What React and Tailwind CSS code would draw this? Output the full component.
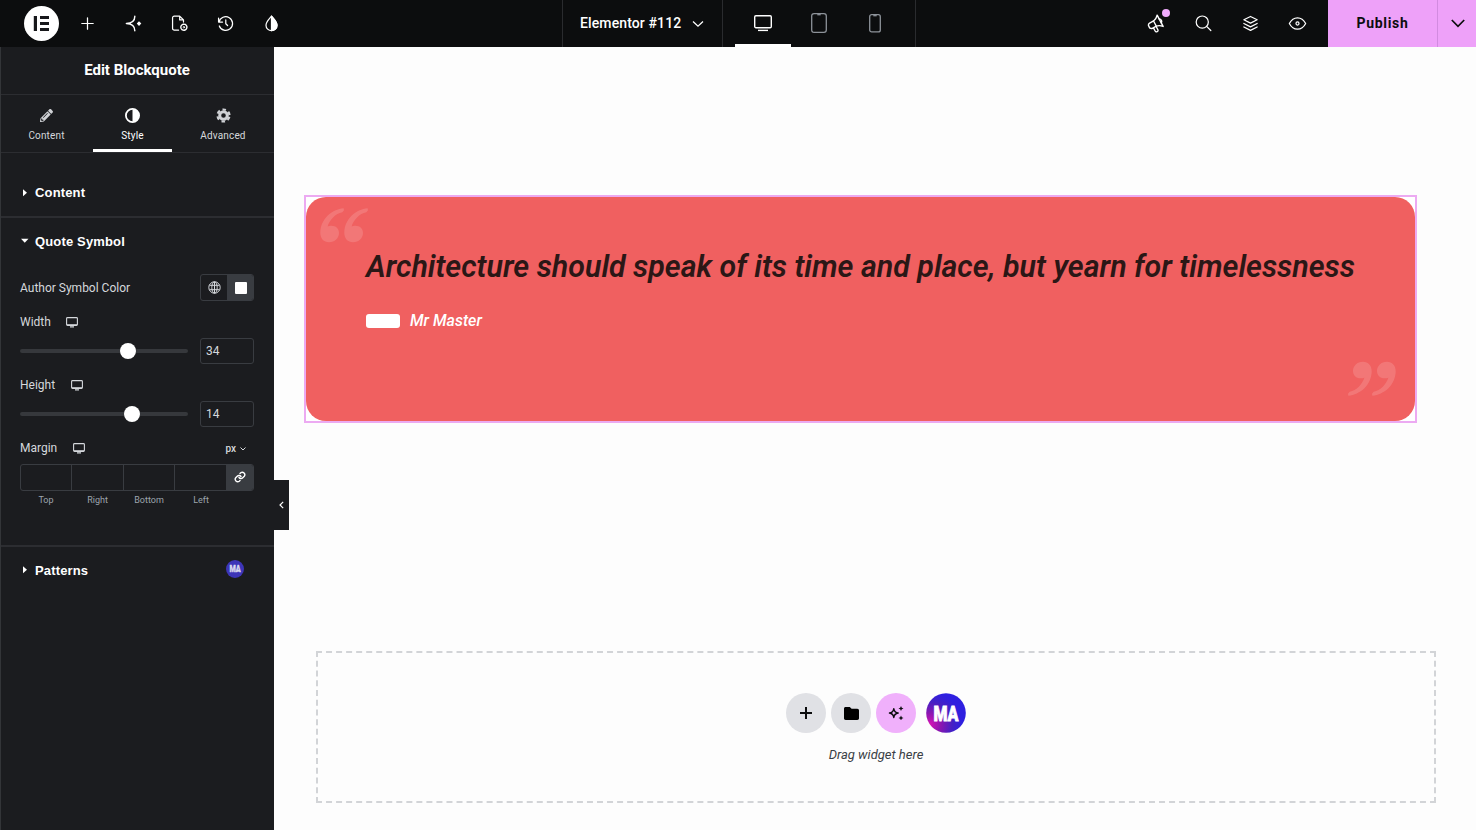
import { FaPencilAlt } from "react-icons/fa";

const Svg = ({ size = 19, className = "", children }) => (
  <svg
    width={size}
    height={size}
    viewBox="0 0 20 20"
    fill="none"
    stroke="currentColor"
    strokeWidth="1.3"
    strokeLinecap="round"
    strokeLinejoin="round"
    className={className}
  >
    {children}
  </svg>
);

const Logo = () => (
  <svg width="35" height="35" viewBox="0 0 35 35" className="ml-6">
    <circle cx="17.5" cy="17.5" r="17.5" fill="#fff" />
    <path
      d="M9.8 10h3.2v15H9.8zM16 10h9v3h-9zM16 16h9v3h-9zM16 22h9v3h-9z"
      fill="#17181b"
    />
  </svg>
);

const leftTools = [
  <Svg>
    <path d="M10 4v12M4 10h12" />
  </Svg>,
  <Svg>
    <path d="M11.4 2.4C11.4 7 8 9.800 2.500 10c5.500.2 8.900 3 8.900 7.600" strokeWidth="1.500" />
    <path d="M15.800 7.500l2.400 2.500-2.400 2.500-2.400-2.500z" fill="currentColor" stroke="none" />
  </Svg>,
  <Svg>
    <path d="M9 17H4.500A1.800 1.800 0 0 1 2.700 15.200V4A1.800 1.800 0 0 1 4.500 2.200h5.700l4 4V8.500M10.200 2.300v4h4" />
    <circle cx="14.600" cy="13.900" r="3.200" strokeWidth="1.500" strokeDasharray="1.900 0.400" />
    <circle cx="14.600" cy="13.900" r="0.800" strokeWidth="0.900" />
  </Svg>,
  <Svg>
    <path d="M3.200 8.600A7.200 7.200 0 1 1 3.500 12.600M2.700 4.300v4.200h4.200M10.300 6.300V10.200l1.900 1.900" />
  </Svg>,
  <Svg>
    <path d="M10 2.200C7.500 5.300 4.200 8.200 4.200 11.800a5.800 5.800 0 0 0 11.600 0C15.800 8.200 12.500 5.300 10 2.200z" />
    <path d="M10 2.200C12.500 5.300 15.800 8.200 15.800 11.800A5.800 5.800 0 0 1 10 17.600z" fill="currentColor" />
  </Svg>,
];

const rightTools = [
  <Svg>
    <g transform="rotate(-28 10 10)">
      <path d="M8.500 6.200H3.800a2.300 2.300 0 0 0-2.300 2.300v1.600a2.300 2.300 0 0 0 2.300 2.300h4.700c2 .2 4.300 1.400 6.200 3.600V2.600c-1.900 2.200-4.200 3.400-6.200 3.600z" strokeWidth="1.500" />
      <path d="M8.500 6.200v6.200M5 12.600v3.700a1.600 1.600 0 0 0 3.200 0v-3.700M14.700 7a2.600 2.600 0 0 1 0 4.700" strokeWidth="1.400" />
    </g>
  </Svg>,
  <Svg>
    <circle cx="8.700" cy="8.500" r="6.400" />
    <path d="M13.300 13l4.400 4.400" />
  </Svg>,
  <Svg>
    <path d="M10 2.600l7 3.500-7 3.500-7-3.500zM3 10l7 3.500 7-3.500M3 13.700l7 3.500 7-3.500" />
  </Svg>,
  <Svg>
    <path d="M1.400 10C3.500 6 6.500 4 10 4s6.500 2 8.600 6c-2.100 4-5.100 6-8.600 6s-6.500-2-8.600-6z" />
    <circle cx="10" cy="10" r="1.600" />
  </Svg>,
];

const TopBar = () => (
  <header className="flex h-[47px] w-full shrink-0 bg-[#0c0d0e] text-white">
    <div className="flex w-[562px] items-center">
      <Logo />
      <div className="ml-[5.5px] flex pb-px">
        {leftTools.map((icon, i) => (
          <span key={i} className="flex w-[46px] justify-center">
            {icon}
          </span>
        ))}
      </div>
    </div>
    <div className="flex w-[160px] items-center border-l border-[#2a2b2e] pl-[17px]">
      <span className="text-[14px] font-medium tracking-[0.12px] whitespace-nowrap">Elementor #112</span>
      <svg width="12" height="8" viewBox="0 0 12 8" fill="none" stroke="#fff" strokeWidth="1.300" className="ml-[11px]">
        <path d="M1 1.500l5 4.700 5-4.700" />
      </svg>
    </div>
    <div className="flex w-[194px] border-x border-[#2a2b2e] pl-3">
      <div className="flex w-14 items-center justify-center border-b-[3px] border-white pt-[2px]">
        <svg width="18" height="18" viewBox="0 0 18 18" fill="none" stroke="#fff" strokeWidth="1.400">
          <rect x="0.700" y="1.700" width="16.600" height="12" rx="1.200" />
          <path d="M4 16.400h10" />
        </svg>
      </div>
      <div className="flex w-14 items-center justify-center pb-px">
        <svg width="16" height="20" viewBox="0 0 16 20" fill="none" stroke="#8d9299" strokeWidth="1.300">
          <rect x="0.700" y="0.700" width="14.600" height="18.600" rx="2.400" />
          <path d="M6.300 1.700h3.400" />
        </svg>
      </div>
      <div className="flex w-14 items-center justify-center">
        <svg width="12" height="19" viewBox="0 0 12 19" fill="none" stroke="#8d9299" strokeWidth="1.300">
          <rect x="0.700" y="0.700" width="10.600" height="17.200" rx="2" />
          <path d="M4.300 1.700h3.400" />
        </svg>
      </div>
    </div>
    <div className="flex flex-1 items-center justify-end pr-[7px] pb-px">
      {rightTools.map((icon, i) => (
        <span key={i} className="relative flex w-[47px] justify-center">
          {icon}
          {i === 0 && (
            <span className="absolute -top-[5px] right-[10px] h-2 w-2 rounded-full bg-[#f0abfc]" />
          )}
        </span>
      ))}
    </div>
    <button className="w-[109px] bg-[#eea1f9] text-[14px] font-bold tracking-[0.7px] text-[#0c0d0e]">
      Publish
    </button>
    <button className="flex w-[39px] items-center justify-center border-l border-[#d28be0] bg-[#eea1f9]">
      <svg width="14" height="9" viewBox="0 0 14 9" fill="none" stroke="#0c0d0e" strokeWidth="1.700" className="ml-[2px]">
        <path d="M0.800 1l6.200 6.300L13.200 1" />
      </svg>
    </button>
  </header>
);

const Monitor = () => (
  <svg width="12" height="11" viewBox="0 0 12 11" fill="none" stroke="#d5d8dc" strokeWidth="1.100">
    <rect x="0.600" y="0.600" width="10.800" height="7.800" rx="0.900" />
    <path d="M1 7.700h10M4 9.900h4" />
  </svg>
);

const SectionTitle = ({ open, children }) => (
  <div className="flex items-center">
    <svg width="8" height="8" viewBox="0 0 8 8" fill="#fff" className="mr-[7px] ml-px -mt-px">
      {open ? <path d="M0 1.800h7.500L3.750 5.800z" /> : <path d="M2 0.200L6 3.700 2 7.200z" />}
    </svg>
    <h2 className="-ml-px font-['Liberation_Sans',sans-serif] text-[13px] font-bold tracking-[0.15px] text-white">
      {children}
    </h2>
  </div>
);

const Slider = ({ percent, value }) => (
  <div className="mt-[6px] flex h-[26px] items-center justify-between">
    <div className="relative h-1 w-[168px] rounded-full bg-[#36383c]">
      <span
        className="absolute -top-[6px] -ml-2 h-4 w-4 rounded-full bg-white"
        style={{ left: percent + "%" }}
      />
    </div>
    <div className="flex h-[26px] w-[54px] items-center rounded-[3px] border border-[#393c41] pl-[5px] text-[12px]">
      {value}
    </div>
  </div>
);

const Label = ({ children }) => (
  <div className="flex items-center">
    <span className="text-[12px]">{children}</span>
    <span className="ml-[15.500px]">
      <Monitor />
    </span>
  </div>
);

const Sidebar = () => (
  <aside className="relative flex w-[274px] shrink-0 flex-col border-l border-[#333538] bg-[#1b1c1f] text-[#d5d8dc]">
    <div className="flex h-12 items-center justify-center border-b border-[#2c2d31] pr-px">
      <h1 className="text-[15px] font-bold text-white">Edit Blockquote</h1>
    </div>
    <div className="flex h-[58px] border-b border-[#2c2d31] text-[10px] tracking-[0.15px]">
      <div className="flex w-[91px] flex-col items-center gap-[7px] pt-[14px]">
        <FaPencilAlt size={13} className="mb-px text-[#d0d2d6]" />
        <span className="leading-3">Content</span>
      </div>
      <div className="ml-px flex w-[79px] flex-col items-center gap-[7px] border-b-[3px] border-white pt-[13px] text-white">
        <svg width="15" height="15" viewBox="0 0 15 15" fill="none">
          <circle cx="7.500" cy="7.500" r="6.600" stroke="#fff" strokeWidth="1.800" />
          <path d="M7.500 1a6.500 6.500 0 0 1 0 13z" fill="#fff" />
        </svg>
        <span className="leading-3">Style</span>
      </div>
      <div className="flex flex-1 flex-col items-center gap-[7px] pt-[13px]">
        <svg width="15" height="15" viewBox="0 0 15 15" fill="none" stroke="#d0d2d6">
          <circle cx="7.500" cy="7.500" r="3.800" strokeWidth="3" />
          <circle cx="7.500" cy="7.500" r="6" strokeWidth="2.200" strokeDasharray="3.500 2.783" strokeDashoffset="-1.400" />
        </svg>
        <span className="leading-3">Advanced</span>
      </div>
    </div>

    <div className="flex h-[65px] items-center border-b-2 border-[#2c2d31] pt-[17px] pl-[19px]">
      <SectionTitle>Content</SectionTitle>
    </div>

    <div className="h-[329px] border-b-2 border-[#2c2d31] pr-5 pl-[19px]">
      <div className="flex h-[47px] items-center">
        <SectionTitle open>Quote Symbol</SectionTitle>
      </div>
      <div className="mt-[9px] flex h-[27px] items-center justify-between">
        <span className="text-[12px]">Author Symbol Color</span>
        <div className="flex h-[27px] w-[54px] overflow-hidden rounded-[3px] border border-[#393c41]">
          <span className="flex flex-1 items-center justify-center">
            <svg width="13" height="13" viewBox="0 0 13 13" fill="none" stroke="#d5d8dc">
              <circle cx="6.500" cy="6.500" r="5.700" />
              <ellipse cx="6.500" cy="6.500" rx="2.700" ry="5.700" />
              <path d="M1.500 4.300h10M1.500 8.700h10M6.500 1v11" />
            </svg>
          </span>
          <span className="flex w-[26px] items-center justify-center bg-[#393c41] pl-[2px]">
            <span className="h-3 w-3 rounded-[1px] bg-white" />
          </span>
        </div>
      </div>

      <div className="mt-[11px] flex h-5 items-center">
        <Label>Width</Label>
      </div>
      <Slider percent={64.5} value="34" />

      <div className="mt-[11px] flex h-5 items-center">
        <Label>Height</Label>
      </div>
      <Slider percent={66.6} value="14" />

      <div className="mt-[11px] flex h-5 items-center justify-between">
        <Label>Margin</Label>
        <span className="flex items-center gap-1 pt-px pr-2 text-[10px] font-medium">
          px
          <svg width="6" height="4" viewBox="0 0 6 4" fill="none" stroke="#d5d8dc">
            <path d="M0.500 0.500L3 3l2.500-2.500" />
          </svg>
        </span>
      </div>
      <div className="mt-[6px] flex h-[27px] overflow-hidden rounded-[3px] border border-[#393c41]">
        <span className="w-[51px] border-r border-[#393c41]" />
        <span className="w-[52px] border-r border-[#393c41]" />
        <span className="w-[51px] border-r border-[#393c41]" />
        <span className="w-[51px]" />
        <span className="flex flex-1 items-center justify-center bg-[#393c41] pb-px">
          <svg width="12" height="12" viewBox="0 0 24 24" fill="none" stroke="#fff" strokeWidth="2.800" strokeLinecap="round">
            <path d="M10 13a5 5 0 0 0 7.500.5l3-3a5 5 0 0 0-7-7L12 5" />
            <path d="M14 11a5 5 0 0 0-7.500-.5l-3 3a5 5 0 0 0 7 7L12 19" />
          </svg>
        </span>
      </div>
      <div className="mt-[3px] flex h-[14px] items-center text-[9px] text-[#9da5ae]">
        <span className="w-[52px] text-center">Top</span>
        <span className="w-[51px] text-center">Right</span>
        <span className="w-[52px] text-center">Bottom</span>
        <span className="w-[52px] text-center">Left</span>
      </div>
    </div>

    <div className="flex h-[47px] items-center justify-between pr-[30px] pl-[19px]">
      <SectionTitle>Patterns</SectionTitle>
      <svg width="18" height="18" viewBox="0 0 40 40" className="mb-[3px]">
        <circle cx="20" cy="20" r="20" fill="#3d35b8" />
        <MaText fill="#d9d9ef" />
      </svg>
    </div>

    <button className="absolute top-[433px] left-[273px] flex h-[50px] w-[15px] items-center justify-center bg-[#1b1c1f]">
      <svg width="5" height="8" viewBox="0 0 5 8" fill="none" stroke="#fff" strokeWidth="1.200">
        <path d="M4.200 0.800L1 4l3.200 3.200" />
      </svg>
    </button>
  </aside>
);

const MaText = ({ fill }) => (
  <text
    x="20"
    y="27.500"
    textAnchor="middle"
    textLength="25"
    lengthAdjust="spacingAndGlyphs"
    fill={fill}
    stroke={fill}
    strokeWidth="0.800"
    fontFamily="Roboto, sans-serif"
    fontWeight="900"
    fontSize="21"
  >
    MA
  </text>
);

const QuoteMark = ({ className }) => (
  <svg width="49" height="35" viewBox="0 0 49 35" fill="#fff" fillOpacity="0.150" className={className}>
    <path d="M23.600 0.300C12 1.500 0.800 10.500 0.300 24.500C0.200 30.500 3.800 34.300 9 34.300C14.800 34.300 19 30 19 25C19 20.500 15.800 17.700 11.500 17.700C9.800 17.700 8.600 18 7.600 18.600C9.500 12 15.500 5.500 22.300 4.300L24 2.200z" />
    <path d="M47.600 0.300C36 1.500 24.800 10.500 24.300 24.500C24.200 30.500 27.800 34.300 33 34.300C38.800 34.300 43 30 43 25C43 20.500 39.800 17.700 35.500 17.700C33.800 17.700 32.600 18 31.600 18.600C33.500 12 39.500 5.500 46.300 4.300L48 2.200z" />
  </svg>
);

const Blockquote = () => (
  <div className="h-[228px] w-[1113px] border-2 border-[#ecaaf2] bg-white">
    <blockquote className="relative h-full rounded-[20px] bg-[#f06060] pt-[48px] pl-[60px] italic">
      <QuoteMark className="absolute top-[11px] left-[14px]" />
      <p className="text-[30.4px] leading-[44px] font-semibold whitespace-nowrap text-[#2b1716]">
        Architecture should speak of its time and place, but yearn for timelessness
      </p>
      <div className="mt-[20px] flex h-6 items-center">
        <span className="h-[14px] w-[34px] rounded-[3px] bg-white" />
        <span className="ml-[10px] text-[16px] font-medium text-white">Mr Master</span>
      </div>
      <QuoteMark className="absolute right-[19px] bottom-[25px] rotate-180" />
    </blockquote>
  </div>
);

const DropArea = () => (
  <div className="ml-3 flex h-[152px] w-[1120px] flex-col items-center border-2 border-dashed border-[#d2d4d7] pt-10">
    <div className="flex gap-[5px]">
      <span className="flex h-10 w-10 items-center justify-center rounded-full bg-[#e0e1e5]">
        <svg width="12" height="12" viewBox="0 0 12 12" stroke="#0c0d0e" strokeWidth="2">
          <path d="M6 0v12M0 6h12" />
        </svg>
      </span>
      <span className="flex h-10 w-10 items-center justify-center rounded-full bg-[#e0e1e5]">
        <svg width="15" height="13" viewBox="0 0 15 13" fill="#000" className="mt-px">
          <path d="M1.500 0h4.300l1.800 1.800h5.700c1 0 1.700.7 1.700 1.700v7.800c0 1-.7 1.700-1.700 1.700H1.700C.7 13 0 12.300 0 11.300V1.500C0 .7.7 0 1.500 0z" />
        </svg>
      </span>
      <span className="flex h-10 w-10 items-center justify-center rounded-full bg-[#f0b0fb]">
        <svg width="16" height="14" viewBox="0 0 16 14" fill="#0c0d0e">
          <path d="M5.800 2.800C6.300 5.600 7.300 6.600 10.100 7.100C7.300 7.600 6.300 8.600 5.800 11.400C5.300 8.600 4.300 7.600 1.500 7.100C4.300 6.600 5.300 5.600 5.800 2.800z" fill="none" stroke="#0c0d0e" strokeWidth="1.500" strokeLinejoin="round" />
          <path d="M13 0l.8 1.700 1.700.8-1.700.8L13 5l-.8-1.700-1.700-.8 1.700-.8zM13 9.500l.8 1.700 1.700.8-1.700.8-.8 1.700-.8-1.700-1.700-.8 1.700-.8z" />
        </svg>
      </span>
      <svg width="40" height="40" viewBox="0 0 40 40" className="ml-[5px]">
        <defs>
          <radialGradient id="ma" cx="0.100" cy="0.780" r="0.800">
            <stop offset="0" stopColor="#d414b4" />
            <stop offset="0.350" stopColor="#8a16b0" />
            <stop offset="0.700" stopColor="#4520c4" />
            <stop offset="1" stopColor="#2e1fe0" />
          </radialGradient>
        </defs>
        <circle cx="20" cy="20" r="19.800" fill="url(#ma)" />
        <MaText fill="#fff" />
      </svg>
    </div>
    <p className="mt-3 text-[13px] leading-5 text-[#3a3f45] italic">Drag widget here</p>
  </div>
);

const App = () => {
  return (
    <div className="flex h-[830px] w-[1476px] flex-col overflow-hidden bg-[#fdfdfd] font-['Roboto',sans-serif]">
      <TopBar />
      <div className="flex flex-1">
        <Sidebar />
        <main className="flex flex-1 flex-col gap-[228px] pt-[148px] pl-[30px]">
          <Blockquote />
          <DropArea />
        </main>
      </div>
    </div>
  );
};

export default App;
